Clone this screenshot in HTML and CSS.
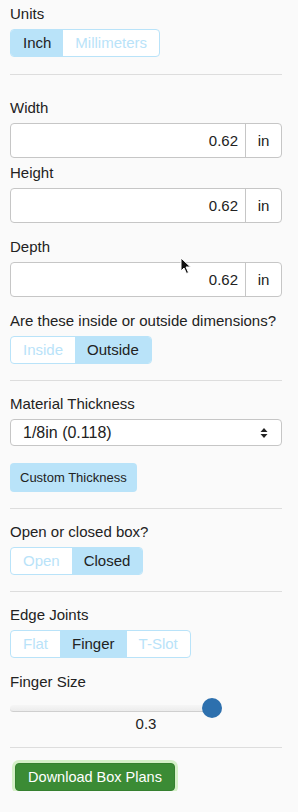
FILE: index.html
```html
<!DOCTYPE html>
<html lang="en">
<head>
    <meta charset="UTF-8">
    <meta name="viewport" content="width=device-width, initial-scale=1.0">
    <title>Box Maker</title>
    <link rel="stylesheet" href="styles.css">
</head>
<body>
    <div class="panel">
        <section class="section section-units">
            <label class="field-label">Units</label>
            <div class="seg">
                <div class="seg-btn active">Inch</div>
                <div class="seg-btn">Millimeters</div>
            </div>
        </section>

        <hr class="divider divider-first">

        <section class="section">
            <label class="field-label">Width</label>
            <div class="input-group">
                <input type="text" value="0.62">
                <span class="addon">in</span>
            </div>

            <label class="field-label tight">Height</label>
            <div class="input-group">
                <input type="text" value="0.62">
                <span class="addon">in</span>
            </div>

            <label class="field-label spaced">Depth</label>
            <div class="input-group">
                <input type="text" value="0.62">
                <span class="addon">in</span>
            </div>

            <label class="field-label spaced">Are these inside or outside dimensions?</label>
            <div class="seg">
                <div class="seg-btn">Inside</div>
                <div class="seg-btn active">Outside</div>
            </div>
        </section>

        <hr class="divider">

        <section class="section">
            <label class="field-label">Material Thickness</label>
            <div class="select-wrap">
                <select>
                    <option>1/8in (0.118)</option>
                    <option>1/4in (0.236)</option>
                </select>
                <svg class="select-arrows" width="8" height="12" viewBox="0 0 8 12">
                    <path d="M4 1 L7.5 5 L0.5 5 Z M4 11 L7.5 7 L0.5 7 Z" fill="#222"/>
                </svg>
            </div>
            <button class="btn-light">Custom Thickness</button>
        </section>

        <hr class="divider">

        <section class="section">
            <label class="field-label">Open or closed box?</label>
            <div class="seg">
                <div class="seg-btn">Open</div>
                <div class="seg-btn active">Closed</div>
            </div>
        </section>

        <hr class="divider">

        <section class="section">
            <label class="field-label">Edge Joints</label>
            <div class="seg">
                <div class="seg-btn">Flat</div>
                <div class="seg-btn active">Finger</div>
                <div class="seg-btn">T-Slot</div>
            </div>

            <label class="field-label finger-label">Finger Size</label>
            <input class="slider" type="range" min="0.1" max="0.3" step="0.01" value="0.3">
            <div class="slider-value">0.3</div>
        </section>

        <hr class="divider divider-last">

        <section class="section">
            <button class="btn-download">Download Box Plans</button>
        </section>

        <!-- mouse pointer from the capture -->
        <svg class="pointer" width="12" height="18" viewBox="0 0 12 18">
            <path d="M1 1 L1 14 L4 11 L6.5 16.5 L8.5 15.5 L6 10 L10.5 10 Z" fill="#111" stroke="#fff" stroke-width="1"/>
        </svg>
    </div>
</body>
</html>
```

FILE: styles.css
```css
:root {
    --bg: #fafafa;
    --text: #222;
    --seg: #b9e3f9;
    --border: #c6c6c6;
    --line: #dddddd;
}

* {
    margin: 0;
    padding: 0;
    box-sizing: border-box;
}

body {
    background-color: var(--bg);
    color: var(--text);
    font-family: 'Liberation Sans', Arial, sans-serif;
}

.panel {
    position: relative;
    width: 298px;
    padding: 4px 16px 0 10px;
}

.field-label {
    display: block;
    font-size: 15px;
    line-height: 20px;
    margin-bottom: 5px;
}

.field-label.tight {
    margin-top: 5px;
}

.field-label.spaced {
    margin-top: 14px;
}

.field-label.finger-label {
    margin-top: 14px;
}

/* segmented buttons */
.seg {
    display: inline-flex;
    border: 1px solid var(--seg);
    border-radius: 4px;
    overflow: hidden;
    background: #fff;
}

.seg-btn {
    height: 26px;
    line-height: 26px;
    padding: 0 12px;
    font-size: 15px;
    color: var(--seg);
}

.seg-btn.active {
    background-color: var(--seg);
    color: var(--text);
}

.divider {
    border: none;
    border-top: 1px solid var(--line);
    margin: 16px 0 13px;
}

.divider-first {
    margin: 17px 0 23px;
}

.divider-last {
    margin-top: 14px;
}

/* number inputs */
.input-group {
    display: flex;
    height: 35px;
    border: 1px solid var(--border);
    border-radius: 4px;
    background: #fff;
    overflow: hidden;
}

.input-group input {
    flex: 1;
    min-width: 0;
    border: none;
    background: transparent;
    text-align: right;
    padding-right: 7px;
    font-family: inherit;
    font-size: 15px;
    color: var(--text);
}

.addon {
    width: 36px;
    border-left: 1px solid var(--border);
    display: flex;
    align-items: center;
    justify-content: center;
    font-size: 15px;
}

/* select */
.select-wrap {
    position: relative;
    height: 27px;
}

.select-wrap select {
    -webkit-appearance: none;
    appearance: none;
    width: 100%;
    height: 27px;
    border: 1px solid var(--border);
    border-radius: 4px;
    background: #fff;
    padding-left: 12px;
    font-family: inherit;
    font-size: 16px;
    color: var(--text);
}

.select-arrows {
    position: absolute;
    right: 14px;
    top: 8px;
    pointer-events: none;
}

.btn-light {
    display: block;
    margin-top: 17px;
    height: 29px;
    padding: 0 10px;
    border: none;
    border-radius: 4px;
    background-color: var(--seg);
    color: var(--text);
    font-family: inherit;
    font-size: 13px;
}

/* slider */
.slider {
    -webkit-appearance: none;
    appearance: none;
    display: block;
    width: 212px;
    height: 22px;
    margin-top: 1px;
    background: transparent;
}

.slider::-webkit-slider-runnable-track {
    height: 7px;
    border-radius: 4px;
    background: linear-gradient(#f6f6f6, #ececec);
    border-bottom: 1px solid #cfcfcf;
}

.slider::-webkit-slider-thumb {
    -webkit-appearance: none;
    width: 20px;
    height: 20px;
    margin-top: -7px;
    border-radius: 50%;
    background: #2d70ae;
}

.slider-value {
    text-align: center;
    font-size: 15px;
    line-height: 18px;
    margin-top: -4px;
}

.btn-download {
    display: block;
    margin: 15px 0 0 5px;
    width: 160px;
    height: 28px;
    border: 1px solid #35802f;
    border-radius: 4px;
    background-color: #3b8b35;
    color: #fff;
    font-family: inherit;
    font-size: 14.5px;
    box-shadow: 0 0 0 3px #d5f0c8;
}

.pointer {
    position: absolute;
    left: 180px;
    top: 257px;
}
```
